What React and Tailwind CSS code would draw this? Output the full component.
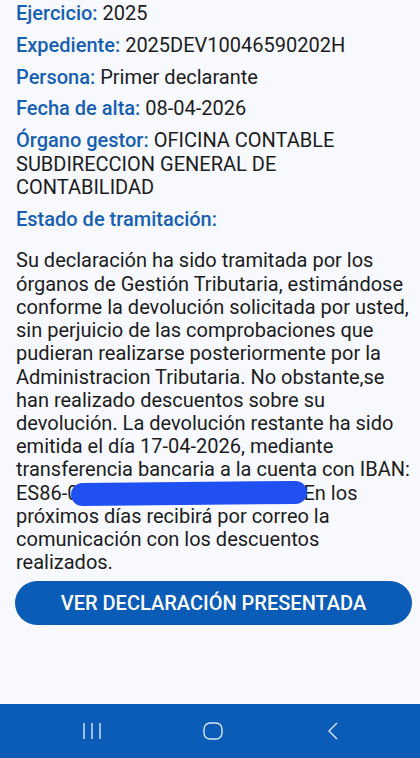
export default function App() {
  const rows = [
    ["Ejercicio:", "2025"],
    ["Expediente:", "2025DEV10046590202H"],
    ["Persona:", "Primer declarante"],
    ["Fecha de alta:", "08-04-2026"],
    ["Órgano gestor:", "OFICINA CONTABLE SUBDIRECCION GENERAL DE CONTABILIDAD"],
  ];

  return (
    <div
      className="flex h-[758px] w-[420px] flex-col bg-[#f7f9fe] text-[#1c1c1c]"
      style={{ fontFamily: "Roboto, 'Noto Sans', sans-serif" }}
    >
      <main className="flex-1 pl-4 pr-[6px] pt-[2px]">
        <div className="flex flex-col gap-[8.3px] pr-3 text-[20px] leading-[23.5px]">
          {rows.map(([label, value]) => (
            <p key={label}>
              <span className="font-medium text-[#175fb1]">{label}</span> {value}
            </p>
          ))}
          <p className="font-medium text-[#175fb1]">Estado de tramitación:</p>
        </div>

        <p className="mt-[18px] text-[20px] leading-[23.2px]">
          Su declaración ha sido tramitada por los órganos de Gestión Tributaria, estimándose
          conforme la devolución solicitada por usted, sin perjuicio de las comprobaciones que
          pudieran realizarse posteriormente por la Administracion Tributaria. No obstante,se han
          realizado descuentos sobre su devolución. La devolución restante ha sido emitida el día
          17-04-2026, mediante transferencia bancaria a la cuenta con IBAN:{" "}
          <span className="whitespace-nowrap">
            ES86-0
            <span className="relative -ml-[8px] inline-block h-[23px] w-[236px] -rotate-[0.6deg] rounded-full bg-[#2050f2] align-[-5px]" />
            <span className="-ml-[3px]">En los</span>
          </span>{" "}
          próximos días recibirá por correo la comunicación con los descuentos realizados.
        </p>

        <button className="mt-[7px] -ml-[1px] flex h-[44px] w-[397px] items-center justify-center rounded-full bg-[#0b5cb6] text-[20px] font-medium text-white">
          VER DECLARACIÓN PRESENTADA
        </button>
      </main>

      <nav className="flex h-[54px] items-center justify-center bg-[#0a5cb7]">
        <div className="flex w-[120px] justify-center pl-[4px]">
          <svg width="20" height="18" viewBox="0 0 20 18">
            <g stroke="#dce8f8" strokeWidth="1.4">
              <line x1="2" y1="1" x2="2" y2="17" />
              <line x1="10" y1="1" x2="10" y2="17" />
              <line x1="18" y1="1" x2="18" y2="17" />
            </g>
          </svg>
        </div>
        <div className="flex w-[120px] justify-center pl-[6px]">
          <svg width="20" height="18" viewBox="0 0 20 18">
            <rect x="1" y="1" width="18" height="16" rx="6" fill="none" stroke="#dce8f8" strokeWidth="1.4" />
          </svg>
        </div>
        <div className="flex w-[120px] justify-center pl-[6px]">
          <svg width="12" height="18" viewBox="0 0 12 18">
            <path d="M10 1 L2 9 L10 17" fill="none" stroke="#dce8f8" strokeWidth="1.4" />
          </svg>
        </div>
      </nav>
    </div>
  );
}
